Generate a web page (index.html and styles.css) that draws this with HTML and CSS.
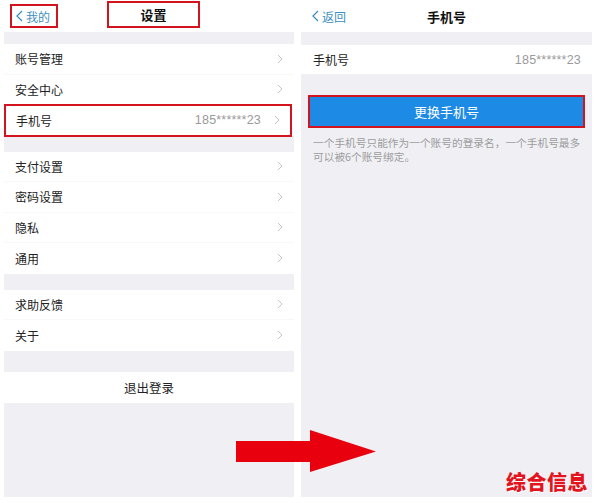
FILE: index.html
```html
<!DOCTYPE html>
<html>
<head>
    <meta charset="utf-8">
    <link rel="stylesheet" href="styles.css">
</head>
<body>
<div class="page">
    <!-- 设置 -->
    <section class="phone phone-left">
        <header class="nav">
            <a class="back boxed">
                <svg class="back-icon" viewBox="0 0 7 12"><polyline points="6,1 1,6 6,11"/></svg>我的
            </a>
            <h1 class="title boxed title-boxed">设置</h1>
        </header>

        <div class="group first">
            <div class="row"><span class="label">账号管理</span><svg class="chev" viewBox="0 0 6 10"><polyline points="1,1 5,5 1,9"/></svg></div>
            <div class="row"><span class="label">安全中心</span><svg class="chev" viewBox="0 0 6 10"><polyline points="1,1 5,5 1,9"/></svg></div>
            <div class="row marked"><span class="label">手机号</span><span class="value">185******23</span><svg class="chev" viewBox="0 0 6 10"><polyline points="1,1 5,5 1,9"/></svg></div>
        </div>

        <div class="group">
            <div class="row"><span class="label">支付设置</span><svg class="chev" viewBox="0 0 6 10"><polyline points="1,1 5,5 1,9"/></svg></div>
            <div class="row"><span class="label">密码设置</span><svg class="chev" viewBox="0 0 6 10"><polyline points="1,1 5,5 1,9"/></svg></div>
            <div class="row"><span class="label">隐私</span><svg class="chev" viewBox="0 0 6 10"><polyline points="1,1 5,5 1,9"/></svg></div>
            <div class="row"><span class="label">通用</span><svg class="chev" viewBox="0 0 6 10"><polyline points="1,1 5,5 1,9"/></svg></div>
        </div>

        <div class="group">
            <div class="row"><span class="label">求助反馈</span><svg class="chev" viewBox="0 0 6 10"><polyline points="1,1 5,5 1,9"/></svg></div>
            <div class="row"><span class="label">关于</span><svg class="chev" viewBox="0 0 6 10"><polyline points="1,1 5,5 1,9"/></svg></div>
        </div>

        <div class="group logout">
            <div class="row center">退出登录</div>
        </div>
    </section>

    <!-- 手机号 -->
    <section class="phone phone-right">
        <header class="nav">
            <a class="back">
                <svg class="back-icon" viewBox="0 0 7 12"><polyline points="6,1 1,6 6,11"/></svg>返回
            </a>
            <h1 class="title">手机号</h1>
        </header>

        <div class="group first">
            <div class="row"><span class="label">手机号</span><span class="value">185******23</span></div>
        </div>

        <div class="action">
            <button class="primary">更换手机号</button>
        </div>
        <p class="hint">一个手机号只能作为一个账号的登录名，一个手机号最多可以被6个账号绑定。</p>
    </section>

    <svg class="arrow" viewBox="0 0 141 42">
        <polygon points="0,11 74,11 74,0 140,21.5 74,42 74,32 0,32"/>
    </svg>
    <div class="watermark">综合信息</div>
</div>
</body>
</html>
```

FILE: styles.css
```css
body {
    margin: 0;
    background: #fff;
    font-family: "Noto Sans CJK SC", "Noto Sans", sans-serif;
    color: #222;
}

.page {
    position: relative;
    display: flex;
    gap: 7px;
    width: 594px;
    height: 503px;
    padding-left: 4px;
    box-sizing: border-box;
}

.phone {
    display: flex;
    flex-direction: column;
    height: 497px;
    background: #f0f0f4;
}

.phone-left {
    width: 290px;
}

.phone-right {
    width: 291px;
}

/* шапка */
.nav {
    position: relative;
    display: flex;
    align-items: center;
    height: 32px;
    background: #fff;
}

.back {
    display: flex;
    align-items: center;
    gap: 3px;
    font-size: 12px;
    color: #3d8fbf;
}

.back-icon {
    width: 7px;
    height: 12px;
    fill: none;
    stroke: #3d8fbf;
    stroke-width: 1.3;
}

.phone-left .back {
    margin: 0 0 0 6px;
    height: 24px;
    padding: 0 6px 0 4px;
}

.phone-right .back {
    margin-left: 11px;
}

.boxed {
    border: 2px solid #d3141f;
    box-sizing: border-box;
}

.title {
    margin: 0;
    font-size: 13px;
    font-weight: bold;
    color: #111;
}

.title-boxed {
    display: flex;
    align-items: center;
    justify-content: center;
    width: 93px;
    height: 27px;
    margin: -4px 0 0 49px;
}

.phone-right .title {
    position: absolute;
    left: 50%;
    transform: translateX(-50%);
}

/* группы */
.group {
    margin-top: 16px;
    background: #fff;
}

.group.first {
    margin-top: 12px;
}

.phone-right .group.first {
    margin-top: 13px;
}

.group.logout {
    margin-top: 21px;
}

.row {
    display: flex;
    align-items: center;
    height: 30.5px;
    padding: 0 11px;
    font-size: 12px;
    border-bottom: 1px solid #f8f8f8;
    box-sizing: border-box;
}

.row:last-child {
    border-bottom: none;
}

.row.marked {
    outline: 2px solid #d3141f;
    outline-offset: -1px;
    margin-left: 1px;
    margin-right: 3px;
}

.row.center {
    justify-content: center;
    height: 31px;
    font-size: 12.5px;
}

.phone-right .row {
    height: 29px;
    padding: 0 11px 0 12px;
}

.label {
    flex: 1;
}

.value {
    font-family: "Liberation Sans", Arial, sans-serif;
    font-size: 12.5px;
    color: #9a9a9a;
    letter-spacing: 0.2px;
}

.chev {
    width: 6px;
    height: 10px;
    margin-left: 13px;
    fill: none;
    stroke: #c4c4c8;
    stroke-width: 1;
}

/* кнопка */
.action {
    margin: 21px 7px 0 7px;
    border: 2px solid #d3141f;
}

.primary {
    display: block;
    width: 100%;
    height: 29px;
    border: none;
    padding: 0;
    background: #1d8be6;
    color: #fff;
    font-family: inherit;
    font-size: 13px;
}

.hint {
    margin: 8px 8px 0 12px;
    font-size: 10.7px;
    line-height: 14px;
    color: #9c9c9c;
}

/* поверх */
.arrow {
    position: absolute;
    left: 236px;
    top: 430px;
    width: 141px;
    height: 42px;
    fill: #e8000f;
}

.watermark {
    position: absolute;
    right: 6px;
    bottom: 7px;
    font-size: 20px;
    font-weight: 900;
    letter-spacing: 0.5px;
    color: #e3141d;
    text-shadow: 1px 1px 0 #fff;
}
```
